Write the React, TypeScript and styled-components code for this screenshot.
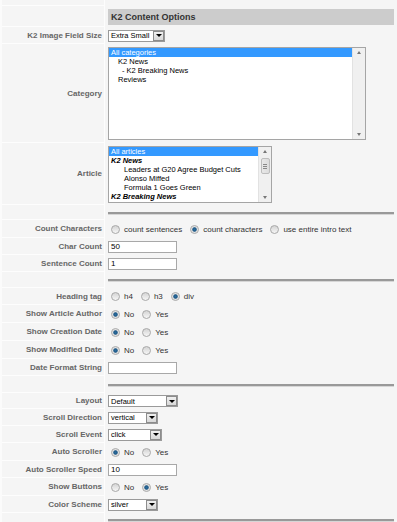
import React from 'react';
import styled, { createGlobalStyle } from 'styled-components';

const GlobalStyle = createGlobalStyle`
  body {
    margin: 0;
    background: #f5f5f5;
    font-family: "Liberation Sans", Arial, sans-serif;
  }
`;

const Table = styled.div`
  width: 395px;
  border-left: 2px solid #fbfbfb;
  display: flex;
  flex-direction: column;
`;

const Row = styled.div<{ $h: number }>`
  display: flex;
  height: ${(p) => p.$h + 1}px;
`;

const Key = styled.div`
  width: 103px;
  box-sizing: border-box;
  border-right: 1px solid #fdfdfd;
  border-bottom: 1px solid #fdfdfd;
  display: flex;
  align-items: center;
  justify-content: flex-end;
  padding-right: 2px;
  font-size: 8px;
  font-weight: bold;
  color: #666;
  white-space: nowrap;
`;

const Value = styled.div<{ $top?: boolean }>`
  flex: 1;
  display: flex;
  align-items: ${(p) => (p.$top ? 'flex-start' : 'center')};
  padding: 0 3px;
  font-size: 8px;
  color: #333;
  white-space: nowrap;
`;

const Header = styled.div`
  flex: 1;
  height: 16px;
  margin-top: 3px;
  background: #cccccc;
  color: #333;
  font-size: 9px;
  font-weight: bold;
  display: flex;
  align-items: center;
  padding-left: 3px;
`;

const Rule = styled.div<{ $off: number }>`
  flex: 1;
  height: 2px;
  margin-top: ${(p) => p.$off}px;
  background: #999;
  border-bottom: 1px solid #d6d6d6;
`;

const Radio = styled.span<{ $on?: boolean }>`
  display: inline-block;
  width: 9px;
  height: 9px;
  box-sizing: border-box;
  border-radius: 50%;
  border: 1px solid #a8a8a8;
  margin: 0 4px 0 3px;
  background: ${(p) =>
    p.$on
      ? 'radial-gradient(circle, #2b6d9e 0, #1f5a88 1.8px, #dcdcdc 2.6px, #f2f2f2 4px)'
      : 'linear-gradient(#d4d4d4, #f6f6f6)'};
`;

const OptText = styled.span`
  margin-right: 5px;
  color: #333;
`;

const TextBox = styled.div`
  width: 69px;
  height: 12px;
  box-sizing: border-box;
  border: 1px solid #a8a8a8;
  background: #fff;
  font-size: 8px;
  color: #000;
  padding-left: 2px;
  line-height: 10px;
`;

const Select = styled.div<{ $w: number }>`
  width: ${(p) => p.$w}px;
  height: 12px;
  box-sizing: border-box;
  border: 1px solid #9a9a9a;
  background: #fff;
  display: flex;
  align-items: center;
  font-size: 7.5px;
  color: #000;
  padding-left: 2px;
`;

const SelectText = styled.span`
  flex: 1;
`;

const DropButton = styled.span`
  width: 11px;
  height: 10px;
  box-sizing: border-box;
  border: 1px solid #8c8c8c;
  background: linear-gradient(#f0f0f0, #d8d8d8);
  display: flex;
  align-items: center;
  justify-content: center;
  &::after {
    content: '';
    border-left: 3px solid transparent;
    border-right: 3px solid transparent;
    border-top: 3px solid #000;
  }
`;

const ListBox = styled.div<{ $w: number; $h: number; $mt: number }>`
  width: ${(p) => p.$w}px;
  height: ${(p) => p.$h}px;
  margin-top: ${(p) => p.$mt}px;
  box-sizing: border-box;
  border: 1px solid #a5a5a5;
  background: #fff;
  display: flex;
  overflow: hidden;
`;

const ListItems = styled.div`
  flex: 1;
  overflow: hidden;
`;

const ListItem = styled.div<{ $sel?: boolean; $indent?: number; $group?: boolean }>`
  height: 9px;
  line-height: 9px;
  font-size: 7.5px;
  padding-left: ${(p) => p.$indent ?? 2}px;
  background: ${(p) => (p.$sel ? '#3399ff' : 'transparent')};
  color: ${(p) => (p.$sel ? '#fff' : '#000')};
  font-weight: ${(p) => (p.$group ? 'bold' : 'normal')};
  font-style: ${(p) => (p.$group ? 'italic' : 'normal')};
`;

const ScrollBar = styled.div`
  width: 12px;
  background: #f0f0f0;
  border-left: 1px solid #e2e2e2;
  display: flex;
  flex-direction: column;
  align-items: center;
  padding: 3px 0;
`;

const Arrow = styled.span<{ $down?: boolean }>`
  border-left: 2.5px solid transparent;
  border-right: 2.5px solid transparent;
  ${(p) => (p.$down ? 'border-top: 3px solid #777;' : 'border-bottom: 3px solid #777;')}
`;

const Thumb = styled.div`
  width: 9px;
  height: 16px;
  margin-top: 5px;
  box-sizing: border-box;
  border: 1px solid #bdbdbd;
  border-radius: 2px;
  background: linear-gradient(90deg, #e8e8e8, #dcdcdc);
  display: flex;
  flex-direction: column;
  align-items: center;
  justify-content: center;
  gap: 1px;
  & > i {
    width: 4px;
    height: 1px;
    background: #888;
  }
`;

const Spacer = styled.div`
  flex: 1;
`;

type Choice = { label: string; on?: boolean };

const Radios: React.FC<{ choices: Choice[] }> = ({ choices }) => (
  <>
    {choices.map((c) => (
      <React.Fragment key={c.label}>
        <Radio $on={c.on} />
        <OptText>{c.label}</OptText>
      </React.Fragment>
    ))}
  </>
);

const DropDown: React.FC<{ w: number; value: string }> = ({ w, value }) => (
  <Select $w={w}>
    <SelectText>{value}</SelectText>
    <DropButton />
  </Select>
);

const noYes = (yes: boolean): Choice[] => [
  { label: 'No', on: !yes },
  { label: 'Yes', on: yes },
];

const App: React.FC = () => {
  return (
    <>
      <GlobalStyle />
      <Table>
        <Row $h={5}>
          <Key />
          <Value />
        </Row>
        <Row $h={20}>
          <Key />
          <Value $top>
            <Header>K2 Content Options</Header>
          </Value>
        </Row>
        <Row $h={16}>
          <Key>K2 Image Field Size</Key>
          <Value>
            <DropDown w={57} value="Extra Small" />
          </Value>
        </Row>
        <Row $h={98}>
          <Key>Category</Key>
          <Value $top>
            <ListBox $w={258} $h={93} $mt={3}>
              <ListItems>
                <ListItem $sel>All categories</ListItem>
                <ListItem $indent={9}>K2 News</ListItem>
                <ListItem $indent={13}>- K2 Breaking News</ListItem>
                <ListItem $indent={9}>Reviews</ListItem>
              </ListItems>
              <ScrollBar>
                <Arrow />
                <Spacer />
                <Arrow $down />
              </ScrollBar>
            </ListBox>
          </Value>
        </Row>
        <Row $h={61}>
          <Key>Article</Key>
          <Value $top>
            <ListBox $w={164} $h={57} $mt={3}>
              <ListItems>
                <ListItem $sel>All articles</ListItem>
                <ListItem $group>K2 News</ListItem>
                <ListItem $indent={15}>Leaders at G20 Agree Budget Cuts</ListItem>
                <ListItem $indent={15}>Alonso Miffed</ListItem>
                <ListItem $indent={15}>Formula 1 Goes Green</ListItem>
                <ListItem $group>K2 Breaking News</ListItem>
              </ListItems>
              <ScrollBar>
                <Arrow />
                <Thumb>
                  <i />
                  <i />
                  <i />
                </Thumb>
                <Spacer />
                <Arrow $down />
              </ScrollBar>
            </ListBox>
          </Value>
        </Row>
        <Row $h={14}>
          <Key />
          <Value $top>
            <Rule $off={7} />
          </Value>
        </Row>
        <Row $h={17}>
          <Key>Count Characters</Key>
          <Value>
            <Radios
              choices={[
                { label: 'count sentences' },
                { label: 'count characters', on: true },
                { label: 'use entire intro text' },
              ]}
            />
          </Value>
        </Row>
        <Row $h={16}>
          <Key>Char Count</Key>
          <Value>
            <TextBox>50</TextBox>
          </Value>
        </Row>
        <Row $h={16}>
          <Key>Sentence Count</Key>
          <Value>
            <TextBox>1</TextBox>
          </Value>
        </Row>
        <Row $h={15}>
          <Key />
          <Value $top>
            <Rule $off={7} />
          </Value>
        </Row>
        <Row $h={16}>
          <Key>Heading tag</Key>
          <Value>
            <Radios choices={[{ label: 'h4' }, { label: 'h3' }, { label: 'div', on: true }]} />
          </Value>
        </Row>
        <Row $h={17}>
          <Key>Show Article Author</Key>
          <Value>
            <Radios choices={noYes(false)} />
          </Value>
        </Row>
        <Row $h={17}>
          <Key>Show Creation Date</Key>
          <Value>
            <Radios choices={noYes(false)} />
          </Value>
        </Row>
        <Row $h={17}>
          <Key>Show Modified Date</Key>
          <Value>
            <Radios choices={noYes(false)} />
          </Value>
        </Row>
        <Row $h={16}>
          <Key>Date Format String</Key>
          <Value>
            <TextBox />
          </Value>
        </Row>
        <Row $h={16}>
          <Key />
          <Value $top>
            <Rule $off={8} />
          </Value>
        </Row>
        <Row $h={15}>
          <Key>Layout</Key>
          <Value>
            <DropDown w={70} value="Default" />
          </Value>
        </Row>
        <Row $h={16}>
          <Key>Scroll Direction</Key>
          <Value>
            <DropDown w={50} value="vertical" />
          </Value>
        </Row>
        <Row $h={16}>
          <Key>Scroll Event</Key>
          <Value>
            <DropDown w={54} value="click" />
          </Value>
        </Row>
        <Row $h={17}>
          <Key>Auto Scroller</Key>
          <Value>
            <Radios choices={noYes(false)} />
          </Value>
        </Row>
        <Row $h={16}>
          <Key>Auto Scroller Speed</Key>
          <Value>
            <TextBox>10</TextBox>
          </Value>
        </Row>
        <Row $h={17}>
          <Key>Show Buttons</Key>
          <Value>
            <Radios choices={noYes(true)} />
          </Value>
        </Row>
        <Row $h={16}>
          <Key>Color Scheme</Key>
          <Value>
            <DropDown w={50} value="silver" />
          </Value>
        </Row>
        <Row $h={12}>
          <Key />
          <Value $top>
            <Rule $off={6} />
          </Value>
        </Row>
      </Table>
    </>
  );
};

export default App;
